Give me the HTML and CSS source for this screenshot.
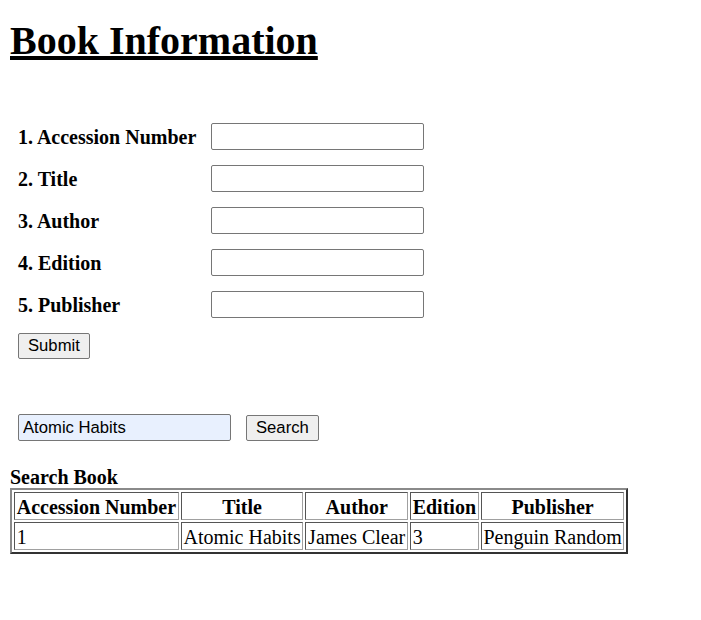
FILE: index.html
```html
<!DOCTYPE html>
<html lang="en">
<head>
<meta charset="utf-8">
<title>Book Information</title>
<link rel="stylesheet" href="styles.css">
</head>
<body>
<h1 class="title">Book Information</h1>
<form class="book-form">
  <table class="form-table">
    <tr><td class="label">1. Accession Number</td><td><input class="field" type="text"></td></tr>
    <tr><td class="label">2. Title</td><td><input class="field" type="text"></td></tr>
    <tr><td class="label">3. Author</td><td><input class="field" type="text"></td></tr>
    <tr><td class="label">4. Edition</td><td><input class="field" type="text"></td></tr>
    <tr><td class="label">5. Publisher</td><td><input class="field" type="text"></td></tr>
    <tr><td><button class="btn" type="button">Submit</button></td><td></td></tr>
  </table>
</form>
<form class="search-form">
  <table class="form-table">
    <tr><td><input class="field field-filled" type="text" value="Atomic Habits"></td><td class="btn-cell"><button class="btn" type="button">Search</button></td></tr>
  </table>
</form>
<div class="result-heading">Search Book</div>
<table class="result-table">
  <tr><th>Accession Number</th><th>Title</th><th>Author</th><th>Edition</th><th>Publisher</th></tr>
  <tr><td>1</td><td>Atomic Habits</td><td>James Clear</td><td>3</td><td>Penguin Random</td></tr>
</table>
</body>
</html>
```
FILE: styles.css
```css
html, body {
  background: #ffffff;
}
body {
  margin: 0;
  padding: 18px 10px 10px;
  font-family: "Liberation Serif", "Times New Roman", serif;
  font-size: 20px;
  color: #000000;
}
.title {
  margin: 0 0 50px;
  font-size: 40px;
  line-height: 46px;
  font-weight: bold;
  text-decoration: underline;
}
.book-form, .search-form {
  margin: 0;
}
.search-form {
  margin-top: 37px;
}
.form-table {
  border-collapse: separate;
  border-spacing: 2px 3px;
}
.form-table td {
  padding: 6px;
  vertical-align: middle;
}
.form-table td.label {
  padding: 8px 7px 6px 6px;
  font-weight: bold;
  line-height: 23px;
  white-space: nowrap;
}
.form-table td.btn-cell {
  padding-left: 7px;
}
.field {
  display: block;
  box-sizing: border-box;
  width: 213px;
  height: 27px;
  margin: 0;
  padding: 0 4px;
  border: 1px solid #767676;
  border-radius: 2px;
  background: #ffffff;
  font-family: "Liberation Sans", Arial, sans-serif;
  font-size: 16.67px;
  color: #000000;
}
.field-filled {
  background: #e8f0fe;
}
.btn {
  display: block;
  box-sizing: border-box;
  height: 26px;
  margin: 0;
  padding: 0 9px;
  border: 1px solid #767676;
  border-radius: 2px;
  background: #efefef;
  font-family: "Liberation Sans", Arial, sans-serif;
  font-size: 16.67px;
  color: #000000;
}
.result-heading {
  margin-top: 15px;
  padding-top: 2px;
  font-weight: bold;
  line-height: 21px;
}
.result-table {
  border-collapse: separate;
  border-spacing: 2px;
  border-style: solid;
  border-width: 2px;
  border-color: #8a8a8a #333333 #333333 #8a8a8a;
}
.result-table th, .result-table td {
  padding: 3px 1.7px 0;
  line-height: 23px;
  border-style: solid;
  border-width: 1px;
  border-color: #555555 #a0a0a0 #a0a0a0 #555555;
  white-space: nowrap;
}
.result-table th {
  font-weight: bold;
  text-align: center;
}
.result-table td {
  text-align: left;
}
```
